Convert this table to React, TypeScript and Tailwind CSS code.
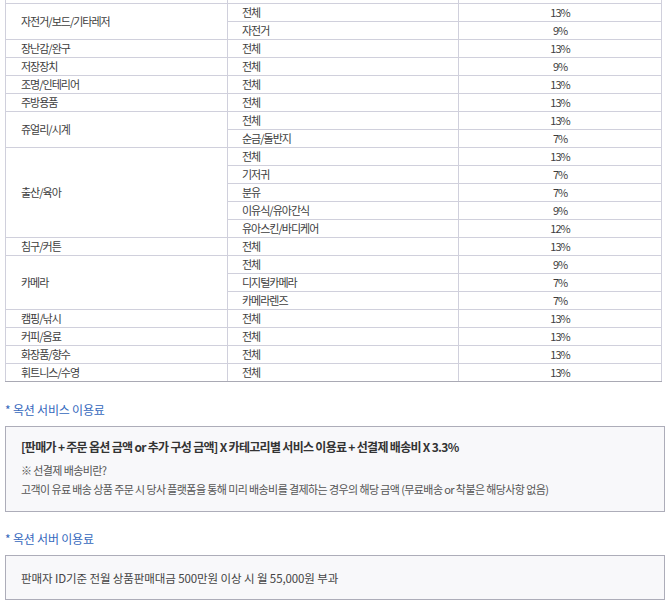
import React from 'react';

type Row = { cat: string; subs: [string, string][] };

const rows: Row[] = [
  { cat: '자전거/보드/기타레저', subs: [['전체', '13%'], ['자전거', '9%']] },
  { cat: '장난감/완구', subs: [['전체', '13%']] },
  { cat: '저장장치', subs: [['전체', '9%']] },
  { cat: '조명/인테리어', subs: [['전체', '13%']] },
  { cat: '주방용품', subs: [['전체', '13%']] },
  { cat: '쥬얼리/시계', subs: [['전체', '13%'], ['순금/돌반지', '7%']] },
  {
    cat: '출산/육아',
    subs: [
      ['전체', '13%'],
      ['기저귀', '7%'],
      ['분유', '7%'],
      ['이유식/유아간식', '9%'],
      ['유아스킨/바디케어', '12%'],
    ],
  },
  { cat: '침구/커튼', subs: [['전체', '13%']] },
  { cat: '카메라', subs: [['전체', '9%'], ['디지털카메라', '7%'], ['카메라렌즈', '7%']] },
  { cat: '캠핑/낚시', subs: [['전체', '13%']] },
  { cat: '커피/음료', subs: [['전체', '13%']] },
  { cat: '화장품/향수', subs: [['전체', '13%']] },
  { cat: '휘트니스/수영', subs: [['전체', '13%']] },
];

const cell = 'h-[18px] p-0 border border-[#d0d0dc] align-middle';

export default function App() {
  const last = rows.length - 1;
  return (
    <div
      className="bg-white text-[#3d3d3d] pl-[5px] w-[670px] h-[606px] overflow-hidden"
      style={{ fontFamily: '"Noto Sans CJK KR", "Noto Sans", sans-serif' }}
    >
      <table className="w-[656px] border-collapse table-fixed text-[11px] leading-[16px] tracking-[-1px]">
        <colgroup>
          <col className="w-[222px]" />
          <col className="w-[231px]" />
          <col className="w-[203px]" />
        </colgroup>
        <tbody>
          <tr>
            <td className="h-[3px] p-0 border border-t-0 border-[#d0d0dc]" />
            <td className="h-[3px] p-0 border border-t-0 border-[#d0d0dc]" />
            <td className="h-[3px] p-0 border border-t-0 border-[#d0d0dc]" />
          </tr>
          {rows.map((r, i) =>
            r.subs.map(([sub, rate], j) => {
              const bottom = i === last ? 'border-b-[#a9a9b4]' : '';
              return (
                <tr key={`${i}-${j}`}>
                  {j === 0 && (
                    <td rowSpan={r.subs.length} className={`${cell} ${bottom} pl-[15px]`}>
                      {r.cat}
                    </td>
                  )}
                  <td className={`${cell} ${bottom} pl-[14px]`}>{sub}</td>
                  <td className={`${cell} ${bottom} text-center`}>{rate}</td>
                </tr>
              );
            })
          )}
        </tbody>
      </table>

      <h3 className="mt-[20px] text-[12px] leading-[16px] tracking-[-0.2px] text-[#3568bd] font-normal">
        * 옥션 서비스 이용료
      </h3>
      <div className="mt-[8px] w-[660px] border border-[#adadb9] bg-[#f8f8fa] pt-[12px] pb-[12px] px-[15px]">
        <p className="text-[12px] leading-[16px] font-bold tracking-[-0.7px] text-[#333]">
          [판매가 + 주문 옵션 금액 or 추가 구성 금액] X 카테고리별 서비스 이용료 + 선결제 배송비 X 3.3%
        </p>
        <div className="mt-[6px] text-[11px] leading-[19px] tracking-[-0.6px] text-[#555]">
          <p>※ 선결제 배송비란?</p>
          <p>고객이 유료 배송 상품 주문 시 당사 플랫폼을 통해 미리 배송비를 결제하는 경우의 해당 금액 (무료배송 or 착불은 해당사항 없음)</p>
        </div>
      </div>

      <h3 className="mt-[19px] text-[12px] leading-[16px] tracking-[-0.2px] text-[#3568bd] font-normal">
        * 옥션 서버 이용료
      </h3>
      <div className="mt-[8px] w-[660px] border border-[#adadb9] bg-[#f8f8fa] pt-[14px] pb-[13px] px-[15px]">
        <p className="text-[11.5px] leading-[16px] tracking-[-0.1px] text-[#444]">
          판매자 ID기준 전월 상품판매대금 500만원 이상 시 월 55,000원 부과
        </p>
      </div>
    </div>
  );
}
